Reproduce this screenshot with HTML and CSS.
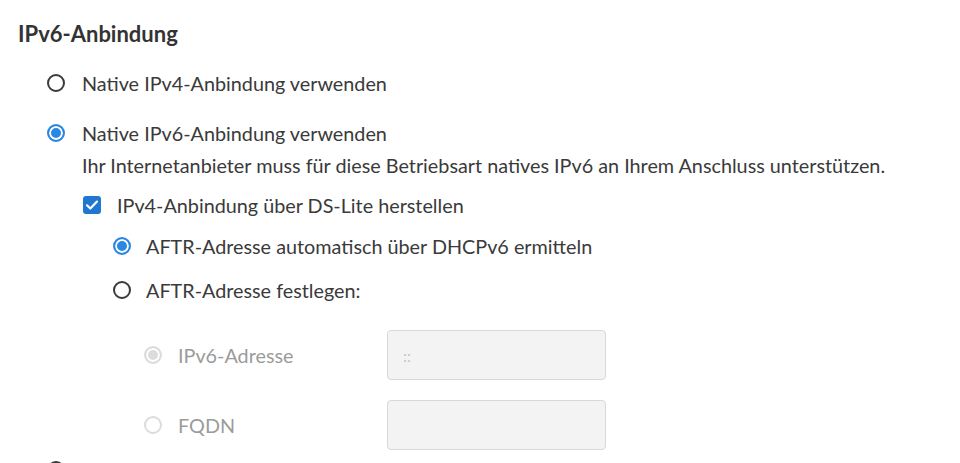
FILE: index.html
```html
<!DOCTYPE html>
<html lang="de">
<head>
<meta charset="utf-8">
<title>IPv6-Anbindung</title>
<link rel="stylesheet" href="styles.css">
</head>
<body>
<main class="page">
  <h2 class="title">IPv6-Anbindung</h2>
  <div class="options">
    <label class="opt opt-first"><span class="radio"></span><span class="lbl">Native IPv4-Anbindung verwenden</span></label>
    <label class="opt opt-second"><span class="radio checked"></span><span class="lbl">Native IPv6-Anbindung verwenden</span></label>
    <div class="sub">
      <p class="hint">Ihr Internetanbieter muss für diese Betriebsart natives IPv6 an Ihrem Anschluss unterstützen.</p>
      <label class="opt opt-check"><span class="check"><svg viewBox="0 0 18 18" width="18" height="18"><path d="M4 9.3l3.3 3.2L14 5.6" fill="none" stroke="#fff" stroke-width="2.2" stroke-linecap="round" stroke-linejoin="round"/></svg></span><span class="lbl">IPv4-Anbindung über DS-Lite herstellen</span></label>
      <div class="sub2">
        <label class="opt opt-auto"><span class="radio checked"></span><span class="lbl">AFTR-Adresse automatisch über DHCPv6 ermitteln</span></label>
        <label class="opt opt-fix"><span class="radio"></span><span class="lbl">AFTR-Adresse festlegen:</span></label>
        <div class="sub3">
          <div class="field-row field-first">
            <label class="opt disabled"><span class="radio checked"></span><span class="lbl">IPv6-Adresse</span></label>
            <div class="input"><span class="placeholder">::</span></div>
          </div>
          <div class="field-row field-second">
            <label class="opt disabled"><span class="radio"></span><span class="lbl">FQDN</span></label>
            <div class="input"></div>
          </div>
        </div>
      </div>
    </div>
    <div class="opt opt-last" aria-label="Weitere Option"><span class="radio"></span></div>
  </div>
</main>
</body>
</html>
```
FILE: styles.css
```css
html, body {
  margin: 0;
  padding: 0;
  background: #fff;
  overflow: hidden;
}
body {
  font-family: "Lato", "Open Sans", sans-serif;
  color: #3a3a3a;
  font-size: 19.8px;
}
.page {
  padding: 19px 0 0 18px;
}
.title {
  margin: 0;
  font-size: 22px;
  line-height: 30px;
  font-weight: 700;
  color: #333;
}
.options {
  margin-left: 29px;
  display: flex;
  flex-direction: column;
  align-items: flex-start;
}
.opt {
  display: flex;
  align-items: center;
  gap: 17px;
  height: 30px;
  line-height: 30px;
  white-space: nowrap;
}
.opt-first { margin-top: 19px; }
.opt-second { margin-top: 20px; }
.opt-last { margin-top: 5px; }
.radio {
  box-sizing: border-box;
  width: 18px;
  height: 18px;
  border: 2px solid #3a3a3a;
  border-radius: 50%;
  background: #fff;
  flex: 0 0 auto;
}
.radio.checked {
  border-color: #2a88e0;
  background: #2a88e0;
  box-shadow: inset 0 0 0 2px #fff;
}
.check {
  box-sizing: border-box;
  width: 18px;
  height: 18px;
  border-radius: 3px;
  background: #1f77d0;
  display: flex;
  flex: 0 0 auto;
}
.check svg { display: block; }
.sub {
  margin-left: 35px;
  display: flex;
  flex-direction: column;
  align-items: flex-start;
}
.hint {
  margin: 2px 0 0;
  height: 30px;
  line-height: 30px;
  white-space: nowrap;
}
.opt-check {
  margin-top: 10px;
  margin-left: 1px;
  gap: 16px;
}
.sub2 {
  margin-left: 31px;
  display: flex;
  flex-direction: column;
  align-items: flex-start;
}
.sub2 .opt { gap: 15px; }
.opt-auto { margin-top: 11px; }
.opt-fix { margin-top: 14px; }
.sub3 {
  margin-left: 31px;
  display: flex;
  flex-direction: column;
}
.field-row {
  display: flex;
  align-items: center;
}
.field-first { margin-top: 25px; }
.field-second { margin-top: 20px; }
.field-row .opt {
  flex: 0 0 243px;
  gap: 16px;
}
.opt.disabled { color: #9b9b9b; }
.opt.disabled .radio {
  border-color: #dcdcdc;
}
.opt.disabled .radio.checked {
  background: #dcdcdc;
  box-shadow: inset 0 0 0 2px #fff;
}
.input {
  box-sizing: border-box;
  width: 219px;
  height: 50px;
  border: 1px solid #d8d8d8;
  border-radius: 4px;
  background: #f3f3f3;
  padding-left: 15px;
  display: flex;
  align-items: center;
}
.placeholder {
  color: #c4c4c4;
  font-size: 16px;
}
```
